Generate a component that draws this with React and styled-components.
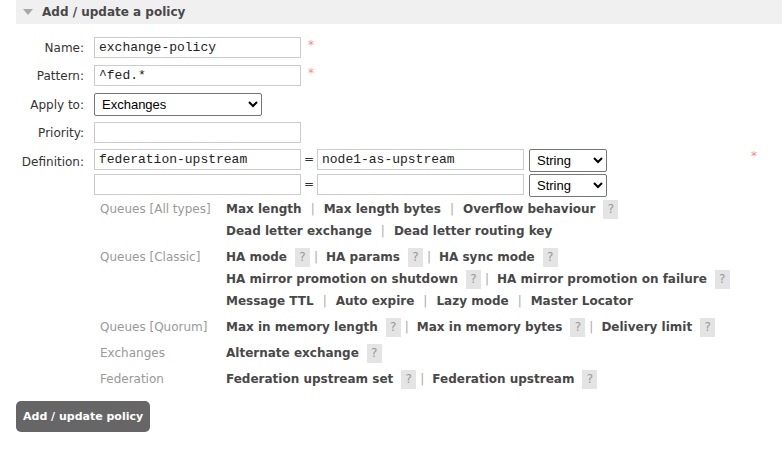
import React from 'react';
import styled, { createGlobalStyle } from 'styled-components';

const Global = createGlobalStyle`
  html, body { margin: 0; padding: 0; background: #fff; }
  body { font-family: "DejaVu Sans", Verdana, sans-serif; font-size: 12px; color: #484848; }
`;

const Page = styled.div`
  padding: 0 0 20px 16px;
`;

const SectionHeader = styled.div`
  display: flex;
  align-items: center;
  gap: 9px;
  height: 24px;
  padding-left: 7px;
  background: #f0f0f0;
  font-weight: bold;
  font-size: 12px;
  color: #484848;
`;

const Triangle = styled.span`
  width: 0;
  height: 0;
  border-left: 5px solid transparent;
  border-right: 5px solid transparent;
  border-top: 6px solid #a8a8a8;
`;

const Form = styled.div`
  display: grid;
  grid-template-columns: 68px 1fr;
  column-gap: 10px;
  width: 741px;
  padding-top: 13px;
`;

const Label = styled.div`
  text-align: right;
  color: #333;
  align-self: ${p => (p.$top ? 'start' : 'center')};
  padding-top: ${p => (p.$top ? '6px' : '0')};
  margin-bottom: ${p => p.$mb || 0}px;
`;

const Field = styled.div`
  display: flex;
  align-items: center;
  margin-bottom: ${p => p.$mb || 0}px;
`;

const TextInput = styled.input`
  box-sizing: border-box;
  width: 207px;
  height: 21px;
  border: 1px solid #ccc;
  padding: 0 4px;
  font-family: "Liberation Mono", "Courier New", monospace;
  font-size: 13px;
  color: #222;
  background: #fff;
  outline: none;
`;

const Req = styled.span`
  color: #f88;
  font-size: 12px;
  margin-left: 7px;
  align-self: flex-start;
  margin-top: ${p => p.$mt || 0}px;
`;

const Select = styled.select`
  box-sizing: border-box;
  width: ${p => p.$w}px;
  height: 23px;
  font-family: "Liberation Sans", Arial, sans-serif;
  font-size: 13px;
  color: #000;
  border: 1px solid #767676;
  border-radius: 2px;
  background: #fff;
  padding: 0 3px;
  margin-left: ${p => p.$ml || 0}px;
`;

const DefRows = styled.div`
  display: flex;
  flex-direction: column;
  gap: 2px;
`;

const DefRow = styled.div`
  display: flex;
  align-items: flex-start;
  height: 23px;
`;

const Eq = styled.span`
  width: 16px;
  text-align: center;
  line-height: 21px;
  color: #333;
`;

const Spacer = styled.span`
  flex: 1;
`;

const Help = styled.div`
  grid-column: 2;
  display: grid;
  grid-template-columns: 126px 1fr;
  margin-left: 6px;
  padding-top: 1px;
`;

const Category = styled.div`
  color: #999;
  line-height: 22px;
  margin-top: ${p => (p.$first ? 0 : 4)}px;
`;

const Lines = styled.div`
  margin-top: ${p => (p.$first ? 0 : 4)}px;
`;

const Line = styled.div`
  line-height: 22px;
  height: 22px;
  display: flex;
  align-items: center;
  white-space: nowrap;
`;

const ArgLink = styled.span`
  font-weight: bold;
  color: #484848;
`;

const Sep = styled.span`
  color: #aaa;
  margin: 0 ${p => (p.$afterHelp ? 8 : 9)}px 0 ${p => (p.$afterHelp ? 4 : 9)}px;
`;

const HelpBox = styled.span`
  display: inline-flex;
  align-items: center;
  justify-content: center;
  width: 15px;
  height: 19px;
  margin-left: 8px;
  background: #e4e4e4;
  color: #999;
  font-size: 12px;
`;

const SubmitButton = styled.button`
  margin-top: 11px;
  height: 31px;
  padding: 0 7px;
  background: #666;
  color: #fff;
  border: none;
  border-radius: 5px;
  font-family: "DejaVu Sans", Verdana, sans-serif;
  font-weight: bold;
  font-size: 11px;
  cursor: pointer;
`;

const groups = [
  {
    label: 'Queues [All types]',
    lines: [
      [['Max length'], ['Max length bytes'], ['Overflow behaviour', true]],
      [['Dead letter exchange'], ['Dead letter routing key']],
    ],
  },
  {
    label: 'Queues [Classic]',
    lines: [
      [['HA mode', true], ['HA params', true], ['HA sync mode', true]],
      [['HA mirror promotion on shutdown', true], ['HA mirror promotion on failure', true]],
      [['Message TTL'], ['Auto expire'], ['Lazy mode'], ['Master Locator']],
    ],
  },
  {
    label: 'Queues [Quorum]',
    lines: [[['Max in memory length', true], ['Max in memory bytes', true], ['Delivery limit', true]]],
  },
  { label: 'Exchanges', lines: [[['Alternate exchange', true]]] },
  { label: 'Federation', lines: [[['Federation upstream set', true], ['Federation upstream', true]]] },
];

function HelpLine({ items }) {
  return (
    <Line>
      {items.map(([name, help], i) => (
        <React.Fragment key={name}>
          {i > 0 && <Sep $afterHelp={items[i - 1][1]}>|</Sep>}
          <ArgLink>{name}</ArgLink>
          {help && <HelpBox>?</HelpBox>}
        </React.Fragment>
      ))}
    </Line>
  );
}

export default function App() {
  return (
    <>
      <Global />
      <Page>
        <SectionHeader>
          <Triangle />
          <span>Add / update a policy</span>
        </SectionHeader>
        <Form>
          <Label $mb={7}>Name:</Label>
          <Field $mb={7}>
            <TextInput defaultValue="exchange-policy" />
            <Req $mt={1}>*</Req>
          </Field>
          <Label $mb={7}>Pattern:</Label>
          <Field $mb={7}>
            <TextInput defaultValue="^fed.*" />
            <Req $mt={1}>*</Req>
          </Field>
          <Label $mb={6}>Apply to:</Label>
          <Field $mb={6}>
            <Select $w={168} defaultValue="exchanges">
              <option value="exchanges">Exchanges</option>
              <option value="queues">Queues</option>
              <option value="all">Exchanges and queues</option>
            </Select>
          </Field>
          <Label $mb={6}>Priority:</Label>
          <Field $mb={6}>
            <TextInput defaultValue="" />
          </Field>
          <Label $top>Definition:</Label>
          <DefRows>
            <DefRow>
              <TextInput defaultValue="federation-upstream" />
              <Eq>=</Eq>
              <TextInput defaultValue="node1-as-upstream" />
              <Select $w={78} $ml={5} defaultValue="string">
                <option value="string">String</option>
                <option value="number">Number</option>
                <option value="boolean">Boolean</option>
                <option value="list">List</option>
              </Select>
              <Spacer />
              <Req $mt={0}>*</Req>
            </DefRow>
            <DefRow>
              <TextInput defaultValue="" />
              <Eq>=</Eq>
              <TextInput defaultValue="" />
              <Select $w={78} $ml={5} defaultValue="string">
                <option value="string">String</option>
                <option value="number">Number</option>
                <option value="boolean">Boolean</option>
                <option value="list">List</option>
              </Select>
            </DefRow>
          </DefRows>
          <Help>
            {groups.map((g, gi) => (
              <React.Fragment key={g.label}>
                <Category $first={gi === 0}>{g.label}</Category>
                <Lines $first={gi === 0}>
                  {g.lines.map((items, li) => (
                    <HelpLine key={li} items={items} />
                  ))}
                </Lines>
              </React.Fragment>
            ))}
          </Help>
        </Form>
        <SubmitButton type="button">Add / update policy</SubmitButton>
      </Page>
    </>
  );
}
